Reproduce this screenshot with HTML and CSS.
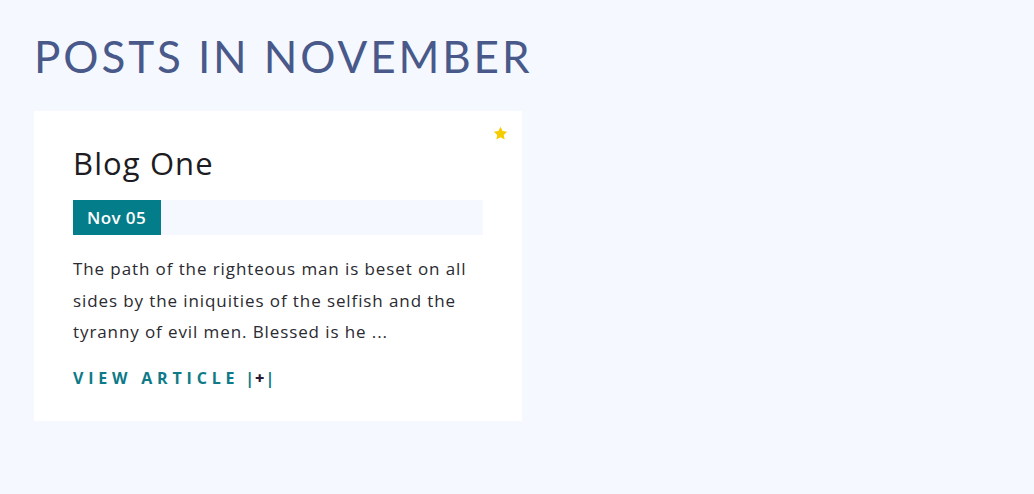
FILE: index.html
```html
<!DOCTYPE html>
<html>
<head>
<meta charset="utf-8">
<link rel="stylesheet" href="styles.css">
</head>
<body>
<main class="page">
  <h1 class="page-title">POSTS IN NOVEMBER</h1>
  <div class="posts">
    <article class="card">
      <svg class="star" viewBox="0 0 24 24" width="17" height="17"><path d="M12 2.5l2.9 6.1 6.6.8-4.9 4.6 1.3 6.6L12 17.3l-5.9 3.3 1.3-6.6-4.9-4.6 6.6-.8z" fill="#f5cc00"/></svg>
      <h2 class="card-title">Blog One</h2>
      <div class="date-bar"><span class="date">Nov 05</span></div>
      <p class="excerpt">The path of the righteous man is beset on all sides by the iniquities of the selfish and the tyranny of evil men. Blessed is he ...</p>
      <a class="more" href="#">VIEW ARTICLE<span class="plus">|<b>+</b>|</span></a>
    </article>
  </div>
</main>
</body>
</html>
```
FILE: styles.css
```css
html, body { margin: 0; padding: 0; }
body {
  background: #f5f8fe;
  width: 1034px;
  height: 494px;
  overflow: hidden;
  font-family: "Open Sans", "Noto Sans", sans-serif;
}
.page { padding: 30px 34px; }
.page-title {
  margin: 0;
  font-family: "Lato", "Open Sans", sans-serif;
  font-weight: 400;
  font-size: 44px;
  line-height: 52px;
  letter-spacing: 2.9px;
  color: #48598a;
}
.posts { margin-top: 29px; display: flex; }
.card {
  position: relative;
  height: 310px;
  box-sizing: border-box;
  width: 488px;
  padding: 30px 39px;
  background: #fff;
}
.star { position: absolute; top: 14px; right: 13px; }
.card-title {
  margin: 0;
  font-weight: 400;
  font-size: 31px;
  line-height: 44px;
  letter-spacing: 1.1px;
  color: #1c1c22;
}
.date-bar {
  margin-top: 15px;
  height: 35px;
  background: #f5f8fe;
  display: flex;
}
.date {
  box-sizing: border-box;
  width: 88px;
  flex: none;
  white-space: nowrap;
  background: #047d8a;
  color: #fff;
  font-weight: 600;
  font-size: 17px;
  line-height: 35px;
  letter-spacing: 0.4px;
  padding: 0 14px;
}
.excerpt {
  margin: 18px 0 0;
  font-size: 17px;
  line-height: 31.5px;
  letter-spacing: 0.9px;
  color: #2a2a30;
}
.more {
  display: inline-block;
  margin-top: 19px;
  color: #0e7a87;
  font-weight: 700;
  font-size: 16px;
  letter-spacing: 4.8px;
  text-decoration: none;
}
.plus { letter-spacing: 0; margin-left: 6px; }
.plus b { color: #2a1830; padding: 0 1px; }
```
